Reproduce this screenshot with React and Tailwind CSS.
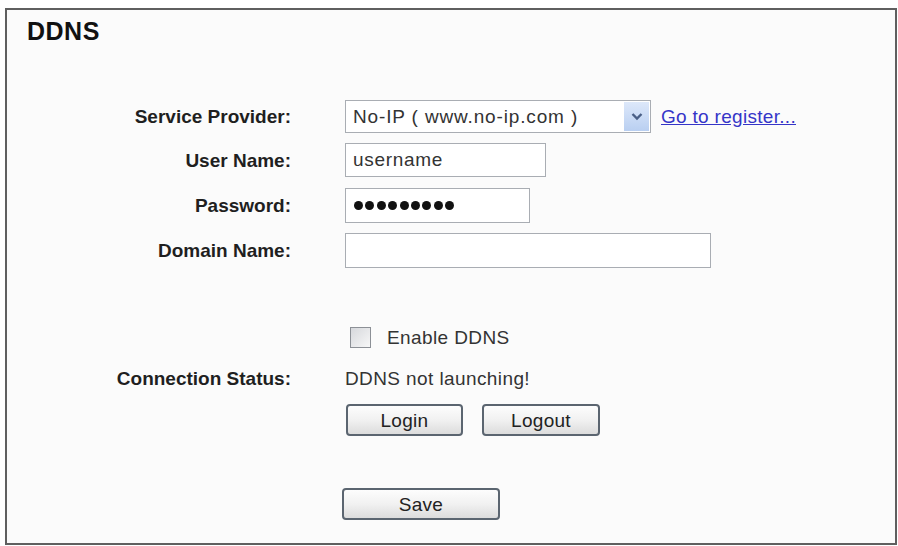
import React from "react";

const FONT = { fontFamily: '"Liberation Sans", Arial, sans-serif' };

const Label = ({ children }) => (
  <div className="w-[284px] shrink-0 text-right text-[19px] font-bold text-[#1f1f1f] leading-none">
    {children}
  </div>
);

const Btn = ({ children, className = "" }) => (
  <button
    type="button"
    className={
      "h-[32px] rounded-[4px] border-2 border-[#5b6570] bg-gradient-to-b from-[#fdfdfd] via-[#f1f1f1] to-[#dcdcdc] text-[19px] tracking-[0.3px] text-[#222] leading-none " +
      className
    }
  >
    {children}
  </button>
);

const Row = ({ label, className, children }) => (
  <div className={"flex items-center " + className}>
    <Label>{label}</Label>
    <div className="ml-[54px] flex items-center">{children}</div>
  </div>
);

export default function App() {
  return (
    <div className="min-h-screen bg-white" style={FONT}>
      <div className="ml-[5px] pt-[8px]">
        <div className="w-[892px] h-[537px] border-2 border-[#5f5f5f] bg-[#fbfbfb]">
          <h1 className="pt-[9px] pl-[20px] text-[25px] font-bold leading-none tracking-[0.5px] text-[#111]">DDNS</h1>

          <div className="flex flex-col">
            <Row label="Service Provider:" className="mt-[56px] h-[33px]">
              <div className="flex h-[33px] w-[306px] items-center border border-[#a9adb3] bg-white">
                <span className="flex-1 pl-[7px] text-[19px] tracking-[0.85px] text-[#333] leading-none">
                  No-IP ( www.no-ip.com )
                </span>
                <div className="mr-[1px] flex h-[29px] w-[25px] items-center justify-center bg-gradient-to-b from-[#dde8fa] to-[#b9cff1]">
                  <svg width="12" height="9" viewBox="0 0 12 9">
                    <path d="M1.5 2 L6 6.5 L10.5 2" fill="none" stroke="#4a5f86" strokeWidth="2.4" />
                  </svg>
                </div>
              </div>
              <a
                href="#"
                className="ml-[10px] text-[19px] tracking-[0.3px] text-[#3535c8] underline leading-none"
              >
                Go to register...
              </a>
            </Row>

            <Row label="User Name:" className="mt-[10px] h-[34px]">
              <input
                readOnly
                value="username"
                className="h-[34px] w-[201px] border border-[#a9adb3] bg-white pl-[7px] text-[19px] tracking-[0.7px] text-[#333] outline-none"
              />
            </Row>

            <Row label="Password:" className="mt-[11px] h-[35px]">
              <div className="flex h-[35px] w-[185px] items-center gap-[2.4px] border border-[#a9adb3] bg-white pl-[8px]">
                {Array.from({ length: 9 }).map((_, i) => (
                  <span key={i} className="h-[9px] w-[9px] rounded-full bg-[#111]" />
                ))}
              </div>
            </Row>

            <Row label="Domain Name:" className="mt-[10px] h-[35px]">
              <input
                readOnly
                value=""
                className="h-[35px] w-[366px] border border-[#a9adb3] bg-white pl-[7px] text-[19px] outline-none"
              />
            </Row>

            <Row label="" className="mt-[57px] h-[24px]">
              <span className="ml-[5px] h-[21px] w-[21px] border border-[#8c9096] bg-gradient-to-br from-[#d6d8dc] to-[#f7f7f7]" />
              <span className="ml-[16px] text-[19px] tracking-[0.4px] text-[#333] leading-none">Enable DDNS</span>
            </Row>

            <Row label="Connection Status:" className="mt-[17px] h-[24px]">
              <span className="text-[19px] tracking-[0.4px] text-[#333] leading-none">DDNS not launching!</span>
            </Row>

            <Row label="" className="mt-[14px] h-[32px]">
              <Btn className="ml-[1px] w-[117px]">Login</Btn>
              <Btn className="ml-[19px] w-[118px]">Logout</Btn>
            </Row>

            <Row label="" className="mt-[52px] h-[32px]">
              <Btn className="-ml-[3px] w-[158px]">Save</Btn>
            </Row>
          </div>
        </div>
      </div>
    </div>
  );
}
